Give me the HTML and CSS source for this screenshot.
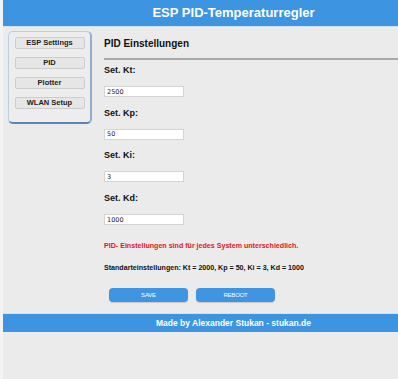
FILE: index.html
```html
<!DOCTYPE html>
<html lang="de">
<head>
<meta charset="utf-8">
<title>ESP PID-Temperaturregler</title>
<link rel="stylesheet" href="styles.css">
</head>
<body>
<div class="page">
  <header class="header"><h1 class="title">ESP PID-Temperaturregler</h1></header>
  <div class="content">
    <nav class="nav">
      <button class="nav-btn">ESP Settings</button>
      <button class="nav-btn">PID</button>
      <button class="nav-btn">Plotter</button>
      <button class="nav-btn">WLAN Setup</button>
    </nav>
    <main class="main">
      <h2 class="heading">PID Einstellungen</h2>
      <hr class="rule">
      <form class="form">
        <label class="label">Set. Kt:</label>
        <input class="field" type="text" value="2500">
        <label class="label">Set. Kp:</label>
        <input class="field" type="text" value="50">
        <label class="label">Set. Ki:</label>
        <input class="field" type="text" value="3">
        <label class="label">Set. Kd:</label>
        <input class="field" type="text" value="1000">
        <p class="note warn">PID- Einstellungen sind für jedes System unterschiedlich.</p>
        <p class="note">Standarteinstellungen: Kt = 2000, Kp = 50, Ki = 3, Kd = 1000</p>
        <div class="actions">
          <button type="button" class="act-btn">SAVE</button>
          <button type="button" class="act-btn">REBOOT</button>
        </div>
      </form>
    </main>
  </div>
  <footer class="footer">Made by Alexander Stukan - stukan.de</footer>
</div>
</body>
</html>
```
FILE: styles.css
```css
html, body {
  margin: 0;
  padding: 0;
  background: #f3f3f3;
  font-family: "Liberation Sans", Arial, sans-serif;
}
.page {
  margin-left: 3px;
  background: #ebebeb;
  min-height: 379px;
}
.header {
  height: 26px;
  background: #3d94e1;
  border-bottom: 1px solid #cfe3f4;
  display: flex;
  align-items: center;
  justify-content: center;
  padding-left: 66px;
}
.title {
  margin: 0;
  color: #fff;
  font-size: 13px;
  font-weight: bold;
  line-height: 18px;
}
.content {
  display: flex;
  align-items: flex-start;
  padding-top: 4px;
}
.nav {
  margin-left: 5px;
  width: 84px;
  box-sizing: border-box;
  height: 93px;
  border: 1px solid #b9cfe2;
  border-bottom: 2px solid #5b86b0;
  border-right: 2px solid #8fb0ce;
  border-radius: 5px;
  background: #ededed;
  display: flex;
  flex-direction: column;
  align-items: center;
  padding-top: 5px;
  gap: 8px;
}
.nav-btn {
  width: 70px;
  height: 12px;
  padding: 0;
  border: 1px solid #cdcdcd;
  border-radius: 2px;
  background: #e6e6e6;
  font-family: "Liberation Sans", Arial, sans-serif;
  font-size: 7.5px;
  font-weight: bold;
  color: #222;
  line-height: 10px;
}
.main {
  flex: 1;
  margin-left: 12px;
}
.heading {
  margin: 6px 0 0;
  font-size: 10px;
  line-height: 14px;
  font-weight: bold;
  color: #111;
}
.rule {
  margin: 7px 0 0;
  border: 0;
  height: 2px;
  background: #a9a9a9;
}
.form {
  display: flex;
  flex-direction: column;
  align-items: flex-start;
  padding-top: 5px;
}
.label {
  font-size: 9px;
  font-weight: bold;
  line-height: 11px;
  color: #111;
}
.field {
  margin: 10px 0 10.7px;
  width: 80px;
  height: 11px;
  box-sizing: border-box;
  border: 1px solid #d4d4d4;
  background: #fff;
  padding: 0 2px;
  font-family: "DejaVu Sans", sans-serif;
  font-size: 6.5px;
  color: #222;
}
.note {
  margin: 0 0 11px;
  font-size: 7.1px;
  font-weight: bold;
  line-height: 11px;
  color: #111;
}
.note.warn {
  color: #e0161f;
  margin-top: 5px;
}
.actions {
  display: flex;
  gap: 8px;
  margin-left: 5px;
  margin-top: 3.5px;
}
.act-btn {
  width: 79px;
  height: 14px;
  padding: 0;
  border: 0;
  border-radius: 4px;
  background: #3f95e2;
  box-shadow: 0 1px 1px rgba(0,0,0,0.15);
  color: #fff;
  font-family: "Liberation Sans", Arial, sans-serif;
  font-size: 6px;
  letter-spacing: -0.2px;
}
.footer {
  margin-top: 11px;
  height: 18px;
  background: #3d94e1;
  border-top: 1px solid #cfe3f4;
  color: #fff;
  font-size: 8.5px;
  font-weight: bold;
  line-height: 18px;
  text-align: center;
  padding-left: 66px;
}
```
